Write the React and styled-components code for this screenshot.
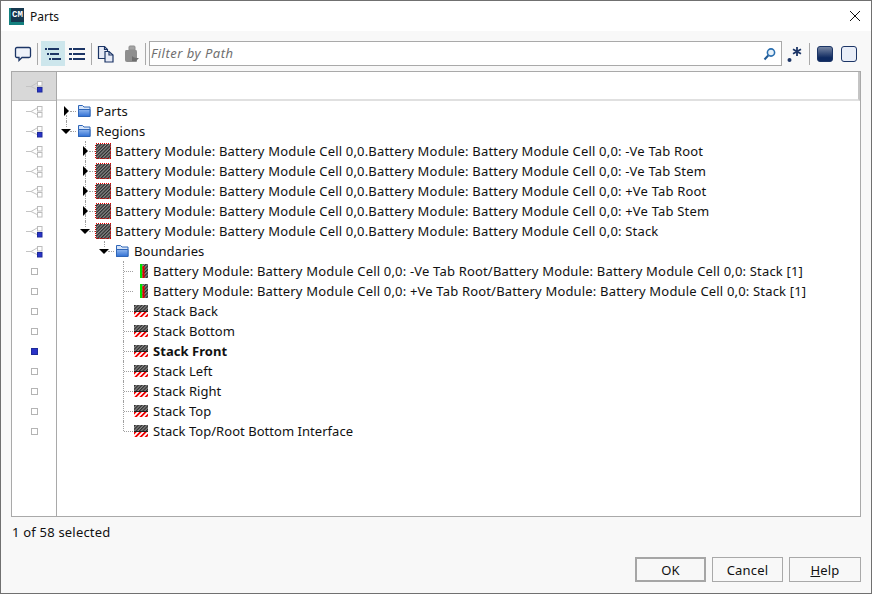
import React from 'react'
import styled, { createGlobalStyle } from 'styled-components'

const Global = createGlobalStyle`
	* { box-sizing: border-box; }
	html, body { margin: 0; padding: 0; background: #f8f8f8; }
	body { font-family: "Noto Sans", "Open Sans", sans-serif; font-size: 13px; color: #111; }
`

const Dialog = styled.div`
	width: 872px;
	height: 594px;
	display: flex;
	flex-direction: column;
	background: #f8f8f8;
	border: 1px solid #707070;
	overflow: hidden;
`
const TitleBar = styled.header`
	height: 30px;
	flex: none;
	background: #fff;
	display: flex;
	align-items: center;
	padding: 0 10px 0 8px;
`
const Logo = styled.div`
	position: relative;
	width: 15px;
	height: 17px;
	background: #14807f;
	margin-right: 6px;
`
const LogoMark = styled.span`
	position: absolute;
	top: 0;
	right: 0;
	width: 13px;
	height: 14px;
	background: #16384f;
	color: #fff;
	font: bold 9px/14px "Liberation Mono", monospace;
	text-align: center;
`
const Title = styled.span`
	flex: 1;
	font-size: 12px;
`
const CloseButton = styled.button`
	width: 12px;
	height: 12px;
	padding: 0;
	border: 0;
	background: none;
	display: block;
`
const Toolbar = styled.div`
	height: 40px;
	flex: none;
	padding: 10px 0 5px 10px;
	display: flex;
	align-items: stretch;
`
const ToolButton = styled.div`
	width: 24px;
	display: flex;
	align-items: center;
	justify-content: center;
	background: ${(p) => (p.$active ? '#cde6ec' : 'transparent')};
`
const ToolSep = styled.div`
	width: 1px;
	background: #a9a9a9;
	margin: 2px ${(p) => p.$r}px 1px ${(p) => p.$l}px;
`
const FilterBox = styled.div`
	width: 633px;
	background: #fff;
	border: 1px solid #a9a9a9;
	display: flex;
	align-items: center;
	padding: 0 5px 0 1px;
`
const FilterText = styled.span`
	flex: 1;
	padding-bottom: 2px;
	font-style: italic;
	color: #6f6f6f;
	font-size: 13px;
	letter-spacing: 0.5px;
`
const TreePanel = styled.div`
	height: 446px;
	flex: none;
	margin: 0 10px;
	border: 1px solid #a9a9a9;
	background: #fff;
	display: flex;
`
const Gutter = styled.div`
	width: 45px;
	flex: none;
	border-right: 1px solid #a9a9a9;
`
const GutterHead = styled.div`
	height: 29px;
	background: #d8d8d8;
	border-bottom: 1px solid #bdbdbd;
	display: flex;
	align-items: center;
	justify-content: center;
`
const GutterRow = styled.div`
	height: 20px;
	display: flex;
	align-items: center;
	justify-content: center;
`
const Main = styled.div`
	flex: 1;
	min-width: 0;
`
const MainHead = styled.div`
	height: 29px;
	border-bottom: 2px solid #e0e0e0;
	border-right: 2px solid #c4c4c4;
`
const Row = styled.div`
	height: 20px;
	display: flex;
	align-items: center;
	white-space: nowrap;
	letter-spacing: ${(p) => p.$track}px;
	font-weight: ${(p) => (p.$bold ? 700 : 400)};
`
const Cell = styled.div`
	position: relative;
	width: 19px;
	height: 20px;
	flex: none;
`
const VLine = styled.i`
	position: absolute;
	left: 9px;
	top: ${(p) => p.$top}px;
	bottom: ${(p) => p.$bottom}px;
	border-left: 1px dotted #a0a0a0;
`
const HLine = styled.i`
	position: absolute;
	left: ${(p) => p.$left}px;
	right: 0;
	top: 10px;
	border-top: 1px dotted #a0a0a0;
`
const Arrow = styled.b`
	position: absolute;
	width: 0;
	height: 0;
	${(p) =>
		p.$open
			? `left: 4px; top: 8px; border-left: 5px solid transparent; border-right: 5px solid transparent; border-top: 5px solid #000;`
			: `left: 7px; top: 5px; border-top: 5px solid transparent; border-bottom: 5px solid transparent; border-left: 5px solid #000;`}
`
const IconBox = styled.div`
	width: 16px;
	height: 16px;
	flex: none;
	margin-right: 4px;
	svg { display: block; }
`
const StatusBar = styled.div`
	height: 30px;
	flex: none;
	padding: 6px 0 0 11px;
	line-height: 18px;
	letter-spacing: 0.2px;
`
const ButtonRow = styled.div`
	flex: 1;
	display: flex;
	justify-content: flex-end;
	gap: 6px;
	padding: 10px 10px 0 0;
`
const DialogButton = styled.button`
	width: ${(p) => p.$w}px;
	height: 25px;
	padding: 0;
	font: inherit;
	letter-spacing: 0.2px;
	color: #111;
	background: #f8f8f8;
	border: ${(p) => (p.$primary ? '2px solid #a6a6a6' : '1px solid #a9a9a9')};
`

const SpeechIcon = () => (
	<svg width="18" height="18" viewBox="0 0 18 18" fill="none">
		<path d="M3 2.5h12q1.5 0 1.5 1.5v7q0 1.5-1.5 1.5H8L5 15.5v-3H3q-1.5 0-1.5-1.5V4q0-1.5 1.5-1.5z" fill="#eef2fa" stroke="#1c3566" strokeWidth="1.3" />
	</svg>
)
const TreeListIcon = () => (
	<svg width="16" height="13" viewBox="0 0 16 13" fill="#1c3566">
		<rect x="0" y="1" width="2" height="2" />
		<rect x="3" y="1" width="11" height="2" />
		<rect x="2" y="6" width="2" height="2" />
		<rect x="5" y="6" width="9" height="2" />
		<rect x="4" y="11" width="2" height="2" />
		<rect x="7" y="11" width="9" height="2" />
	</svg>
)
const FlatListIcon = () => (
	<svg width="16" height="13" viewBox="0 0 16 13" fill="#1c3566">
		<rect x="0" y="1" width="3" height="2" />
		<rect x="4" y="1" width="12" height="2" />
		<rect x="0" y="6" width="3" height="2" />
		<rect x="4" y="6" width="12" height="2" />
		<rect x="0" y="11" width="3" height="2" />
		<rect x="4" y="11" width="12" height="2" />
	</svg>
)
const CopyIcon = () => (
	<svg width="18" height="18" viewBox="0 0 18 18" fill="#e6eaf6" stroke="#1c3566" strokeWidth="1.2">
		<path d="M1.5 1.5h6l3 3v9h-9z" />
		<path d="M7.5 1.5v3h3" fill="none" />
		<path d="M8 6.5h4l4 3.5v7H8z" />
		<path d="M12 6.5V10h4" fill="none" />
	</svg>
)
const BagIcon = () => (
	<svg width="16" height="18" viewBox="0 0 16 18" fill="#8e8e8e" style={{ marginLeft: 3 }}>
		<path d="M5 5V2q0-1 1-1h4q1 0 1 1v3z" fill="#a4a4a4" stroke="#8e8e8e" />
		<path d="M2 5h10q1 0 1 2v9q0 1-1 1H3q-2 0-2-2V7q0-2 1-2z" />
		<path d="M8 11c2 2 4 2 7 2l-3 3H8z" fill="#6e6e6e" />
	</svg>
)
const SearchIcon = () => (
	<svg width="13" height="14" viewBox="0 0 13 14" fill="none">
		<circle cx="8" cy="5.5" r="3.6" stroke="#2a6fb0" strokeWidth="1.6" fill="#e8f2fa" />
		<path d="M5.2 8.5 1.5 12.5" stroke="#1f5a96" strokeWidth="2" />
	</svg>
)
const RegexIcon = () => (
	<svg width="18" height="18" viewBox="0 0 18 18" style={{ marginLeft: 3 }}>
		<circle cx="2.5" cy="15" r="2" fill="#1c3566" />
		<path d="M10 2v9M6 4.3l8 4.4M14 4.3 6 8.7" stroke="#1c3566" strokeWidth="1.8" />
	</svg>
)
const SolidIcon = () => (
	<svg width="16" height="16" viewBox="0 0 16 16">
		<defs>
			<linearGradient id="solid" x1="0" y1="0" x2="0" y2="1">
				<stop offset="0" stopColor="#7c8aa6" />
				<stop offset="0.75" stopColor="#0f2a60" />
			</linearGradient>
		</defs>
		<rect x="0.5" y="0.5" width="15" height="15" rx="2.5" fill="url(#solid)" stroke="#1c3566" />
	</svg>
)
const HollowIcon = () => (
	<svg width="16" height="16" viewBox="0 0 16 16">
		<rect x="0.5" y="0.5" width="15" height="15" rx="2.5" fill="#e9eef8" stroke="#1c3566" />
	</svg>
)
const CloseIcon = () => (
	<svg width="12" height="12" viewBox="0 0 12 12">
		<path d="M1 1l10 10M11 1 1 11" stroke="#111" strokeWidth="1" />
	</svg>
)
const LinkGlyph = ({ on }) => (
	<svg width="18" height="14" viewBox="0 0 18 14" fill="none">
		<path d="M1 7.5h5l6-3.5M6 7.5l6 3" stroke="#c4c4c4" />
		<rect x="12.5" y="2.5" width="4.5" height="4.5" fill="#fff" stroke="#bcbcbc" />
		{on ? (
			<rect x="12.5" y="8.5" width="4.5" height="4.5" fill="#2a33c8" stroke="#1d2a9a" />
		) : (
			<rect x="12.5" y="8.5" width="4.5" height="4.5" fill="#fff" stroke="#bcbcbc" />
		)}
	</svg>
)
const BoxGlyph = ({ on }) => (
	<svg width="8" height="8" viewBox="0 0 8 8">
		<rect x="1.5" y="1.5" width="6" height="6" fill={on ? '#2a33c8' : '#fff'} stroke={on ? '#1d2a9a' : '#b4b4b4'} />
	</svg>
)
const FolderIcon = () => (
	<svg width="16" height="16" viewBox="0 0 16 16">
		<defs>
			<linearGradient id="fold" x1="0" y1="0" x2="0" y2="1">
				<stop offset="0" stopColor="#8fb6ee" />
				<stop offset="1" stopColor="#2f6fd4" />
			</linearGradient>
		</defs>
		<path d="M2.5 2.5h4l1.5 1.5h6v9.5h-11.5z" fill="#d6e4f8" stroke="#2f66b8" />
		<path d="M2.5 6.5h11.5v7h-11.5z" fill="url(#fold)" stroke="#2f66b8" />
	</svg>
)
const Hatch = ({ id, color = '#2a2a2a', bg = '#8a8a8a', size = 2.4 }) => (
	<pattern id={id} width={size} height={size} patternUnits="userSpaceOnUse" patternTransform="rotate(45)">
		<rect width={size} height={size} fill={bg} />
		<rect width={size / 2} height={size} fill={color} />
	</pattern>
)
const RegionIcon = () => (
	<svg width="16" height="16" viewBox="0 0 16 16">
		<defs>
			<Hatch id="region" />
		</defs>
		<rect x="0.5" y="0.5" width="15" height="15" fill="url(#region)" stroke="#e00000" strokeDasharray="1 1" shapeRendering="crispEdges" />
	</svg>
)
const InterfaceIcon = () => (
	<svg width="16" height="16" viewBox="0 0 16 16">
		<defs>
			<Hatch id="iface" />
		</defs>
		<rect x="7" y="1" width="2.5" height="14" fill="#00e000" />
		<rect x="9.5" y="1" width="5.5" height="14" fill="url(#iface)" />
		<rect x="9.5" y="3" width="2" height="12" fill="#e00000" />
	</svg>
)
const BoundaryIcon = () => (
	<svg width="16" height="16" viewBox="0 0 16 16">
		<defs>
			<Hatch id="bound" />
			<Hatch id="stripe" color="#f00000" bg="#ffffff" size={3.6} />
		</defs>
		<rect x="1" y="2" width="14" height="6" fill="url(#bound)" />
		<rect x="1" y="8" width="14" height="6" fill="url(#stripe)" />
		<rect x="1" y="8" width="14" height="1" fill="#222" />
	</svg>
)

const BM = 'Battery Module: Battery Module Cell 0,0'
const rows = [
	{ label: 'Parts', icon: 'folder', depth: 0, arrow: 'closed', line: 'down', gutter: 'link' },
	{ label: 'Regions', icon: 'folder', depth: 0, arrow: 'open', line: 'up', gutter: 'linkOn' },
	{ label: `${BM}.${BM}: -Ve Tab Root`, icon: 'region', depth: 1, arrow: 'closed', line: 'both', gutter: 'link' },
	{ label: `${BM}.${BM}: -Ve Tab Stem`, icon: 'region', depth: 1, arrow: 'closed', line: 'both', gutter: 'link' },
	{ label: `${BM}.${BM}: +Ve Tab Root`, icon: 'region', depth: 1, arrow: 'closed', line: 'both', gutter: 'link' },
	{ label: `${BM}.${BM}: +Ve Tab Stem`, icon: 'region', depth: 1, arrow: 'closed', line: 'both', gutter: 'link' },
	{ label: `${BM}.${BM}: Stack`, icon: 'region', depth: 1, arrow: 'open', line: 'up', gutter: 'linkOn' },
	{ label: 'Boundaries', icon: 'folder', depth: 2, arrow: 'open', line: 'up', gutter: 'linkOn' },
	{ label: `${BM}: -Ve Tab Root/${BM}: Stack [1]`, icon: 'iface', depth: 3, line: 'both', gutter: 'box' },
	{ label: `${BM}: +Ve Tab Root/${BM}: Stack [1]`, icon: 'iface', depth: 3, line: 'both', gutter: 'box' },
	{ label: 'Stack Back', icon: 'bound', depth: 3, line: 'both', gutter: 'box' },
	{ label: 'Stack Bottom', icon: 'bound', depth: 3, line: 'both', gutter: 'box' },
	{ label: 'Stack Front', icon: 'bound', depth: 3, line: 'both', gutter: 'boxOn', bold: true },
	{ label: 'Stack Left', icon: 'bound', depth: 3, line: 'both', gutter: 'box' },
	{ label: 'Stack Right', icon: 'bound', depth: 3, line: 'both', gutter: 'box' },
	{ label: 'Stack Top', icon: 'bound', depth: 3, line: 'both', gutter: 'box' },
	{ label: 'Stack Top/Root Bottom Interface', icon: 'bound', depth: 3, line: 'up', gutter: 'box' },
]

const icons = { folder: FolderIcon, region: RegionIcon, iface: InterfaceIcon, bound: BoundaryIcon }

const gutterGlyph = (kind) => {
	if (kind === 'link') return <LinkGlyph />
	if (kind === 'linkOn') return <LinkGlyph on />
	if (kind === 'box') return <BoxGlyph />
	return <BoxGlyph on />
}

const TreeRow = ({ row }) => {
	const Icon = icons[row.icon]
	const indent = Array.from({ length: row.depth })
	// the long names have wide caps in the reference, so they get a bit more tracking
	const track = row.label.length > 40 ? 0.18 : 0.04
	return (
		<Row $bold={row.bold} $track={track}>
			{indent.map((_, i) => (
				<Cell key={i} />
			))}
			<Cell>
				{row.line !== 'down' ? <VLine $top={0} $bottom={row.line === 'up' ? (row.arrow ? 14 : 10) : 0} /> : null}
				{row.line !== 'up' ? <VLine $top={row.arrow ? 14 : 0} $bottom={0} /> : null}
				<HLine $left={row.arrow ? 13 : 10} />
				{row.arrow ? <Arrow $open={row.arrow === 'open'} /> : null}
			</Cell>
			<IconBox>
				<Icon />
			</IconBox>
			<span>{row.label}</span>
		</Row>
	)
}

const App = () => (
	<Dialog>
		<Global />
		<TitleBar>
			<Logo>
				<LogoMark>CM</LogoMark>
			</Logo>
			<Title>Parts</Title>
			<CloseButton aria-label="Close">
				<CloseIcon />
			</CloseButton>
		</TitleBar>
		<Toolbar>
			<ToolButton>
				<SpeechIcon />
			</ToolButton>
			<ToolSep $l={2} $r={3} />
			<ToolButton $active>
				<TreeListIcon />
			</ToolButton>
			<ToolButton>
				<FlatListIcon />
			</ToolButton>
			<ToolSep $l={2} $r={2} />
			<ToolButton>
				<CopyIcon />
			</ToolButton>
			<ToolButton>
				<BagIcon />
			</ToolButton>
			<ToolSep $l={3} $r={3} />
			<FilterBox>
				<FilterText>Filter by Path</FilterText>
				<SearchIcon />
			</FilterBox>
			<ToolButton>
				<RegexIcon />
			</ToolButton>
			<ToolSep $l={3} $r={3} />
			<ToolButton>
				<SolidIcon />
			</ToolButton>
			<ToolButton>
				<HollowIcon />
			</ToolButton>
		</Toolbar>
		<TreePanel>
			<Gutter>
				<GutterHead>
					<LinkGlyph on />
				</GutterHead>
				{rows.map((row) => (
					<GutterRow key={row.label}>{gutterGlyph(row.gutter)}</GutterRow>
				))}
			</Gutter>
			<Main>
				<MainHead />
				{rows.map((row) => (
					<TreeRow key={row.label} row={row} />
				))}
			</Main>
		</TreePanel>
		<StatusBar>1 of 58 selected</StatusBar>
		<ButtonRow>
			<DialogButton $w={71} $primary>OK</DialogButton>
			<DialogButton $w={71}>Cancel</DialogButton>
			<DialogButton $w={72}>
				<u>H</u>elp
			</DialogButton>
		</ButtonRow>
	</Dialog>
)

export default App
